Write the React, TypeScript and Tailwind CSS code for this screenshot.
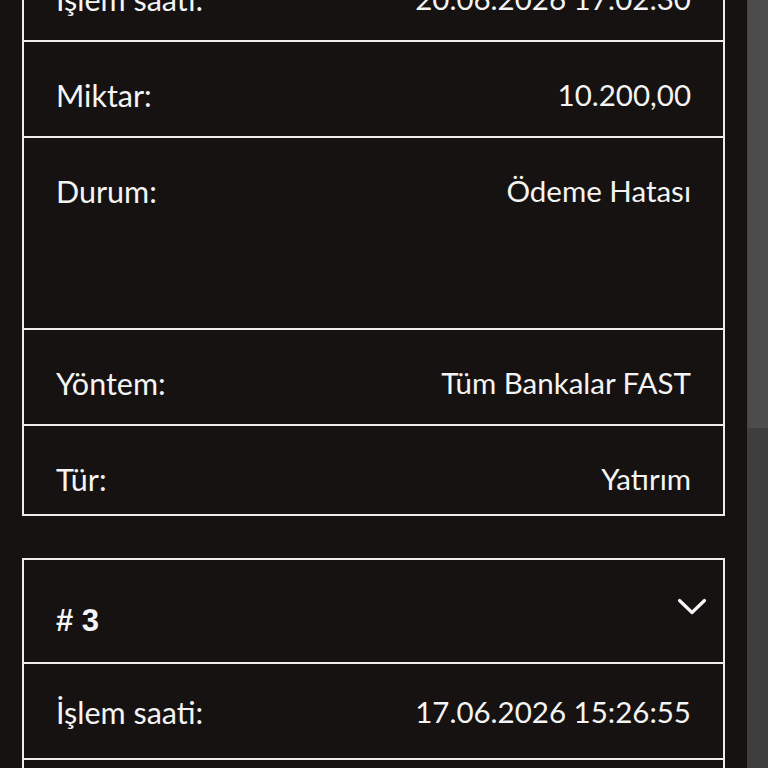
const cards = [
  {
    id: 2,
    pad: "pt-[32px]",
    rows: [
      { label: "İşlem saati:", value: "20.06.2026 17:02:30" },
      { label: "Miktar:", value: "10.200,00" },
      { label: "Durum:", value: "Ödeme Hatası", tall: true },
      { label: "Yöntem:", value: "Tüm Bankalar FAST" },
      { label: "Tür:", value: "Yatırım" },
    ],
  },
  {
    id: 3,
    pad: "pt-[27px]",
    rows: [
      { label: "İşlem saati:", value: "17.06.2026 15:26:55" },
      { label: "Miktar:", value: "5.000,00" },
    ],
  },
];

function Chevron() {
  return (
    <svg width="30" height="18" viewBox="0 0 30 18" fill="none" className="mt-[38px] shrink-0">
      <path d="M2.5 2.5 L15 14.5 L27.5 2.5" stroke="#f4f4f4" strokeWidth="3.2" strokeLinecap="round" strokeLinejoin="round" />
    </svg>
  );
}

type Row = { label: string; value: string; tall?: boolean };

function Card({ id, rows, pad, className }: { id: number; rows: Row[]; pad: string; className?: string }) {
  return (
    <div className={`border-2 border-[#ececec] bg-[#151211] ${className ?? ""}`}>
      <div className="flex h-[102px] items-start justify-between pl-8 pr-[16px]">
        <span className="mt-[40px] font-['Liberation_Sans',Arial,sans-serif] text-[31px] font-bold leading-[42px] text-[#f6f6f6]">
          # {id}
        </span>
        <Chevron />
      </div>
      {rows.map((r, i) => (
        <div
          key={r.label}
          className={`flex items-start justify-between border-t-2 border-[#ececec] px-8 ${pad} ${
            r.tall ? "h-[192px]" : i === rows.length - 1 ? "h-[90px]" : "h-[96px]"
          }`}
        >
          <span className="text-[30.5px] leading-[42px]">{r.label}</span>
          <span className="text-[29.5px] leading-[42px]">{r.value}</span>
        </div>
      ))}
    </div>
  );
}

export default function App() {
  return (
    <div className="flex h-[768px] overflow-hidden bg-[#151211] font-['Lato','Noto_Sans',sans-serif] text-[#f4f4f4]">
      <main className="flex-1 px-[22px]">
        <Card id={cards[0].id} rows={cards[0].rows} pad={cards[0].pad} className="mt-[-160px]" />
        <Card id={cards[1].id} rows={cards[1].rows} pad={cards[1].pad} className="mt-[42px]" />
      </main>
      <div className="flex w-[21px] flex-col bg-[#3e3e3e]">
        <div className="h-[428px] border-l border-[#444] bg-[#4c4c4c]" />
      </div>
    </div>
  );
}
